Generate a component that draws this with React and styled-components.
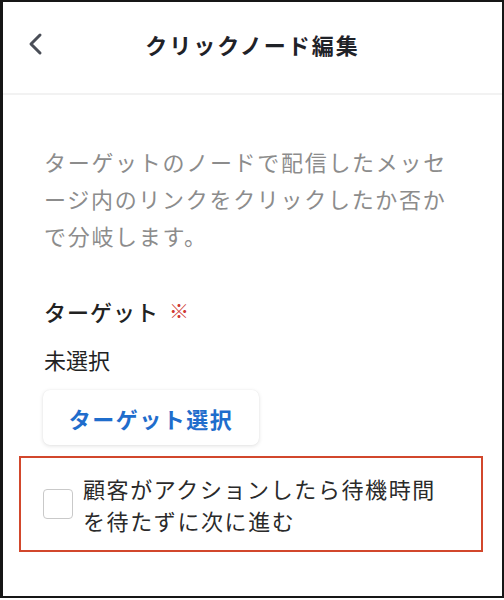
import React, { useState } from 'react'
import styled, { createGlobalStyle } from 'styled-components'

const GlobalStyle = createGlobalStyle`
    html, body {
        margin: 0;
        padding: 0;
        background: #ffffff;
    }
    body {
        font-family: "Noto Sans CJK JP", "Noto Sans", sans-serif;
    }
    * {
        box-sizing: border-box;
    }
`;

function App() {
    const [skipWait, setSkipWait] = useState(false)

    return (
        <>
            <GlobalStyle />
            <Frame>
                <Header>
                    <BackButton aria-label="戻る">
                        <svg width="16" height="24" viewBox="0 0 16 24" fill="none">
                            <polyline points="12,3 3,12 12,21" stroke="#4a4e57" strokeWidth="3" strokeLinecap="round" strokeLinejoin="round" />
                        </svg>
                    </BackButton>
                    <Title>クリックノード編集</Title>
                    <span />
                </Header>
                <Body>
                    <Description>
                        ターゲットのノードで配信したメッセージ内のリンクをクリックしたか否かで分岐します。
                    </Description>
                    <FieldLabel>
                        ターゲット<Required>※</Required>
                    </FieldLabel>
                    <FieldValue>未選択</FieldValue>
                    <SelectButton type="button">ターゲット選択</SelectButton>
                    <OptionBox>
                        <CheckBox
                            type="checkbox"
                            checked={skipWait}
                            onChange={(e) => setSkipWait(e.target.checked)}
                        />
                        <OptionText>顧客がアクションしたら待機時間を待たずに次に進む</OptionText>
                    </OptionBox>
                </Body>
            </Frame>
        </>
    )
}

const Frame = styled.div`
    width: 504px;
    height: 598px;
    border: 2px solid #161616;
    border-left-width: 3px;
    background: #ffffff;
    display: flex;
    flex-direction: column;
    overflow: hidden;
`;

const Header = styled.header`
    height: 93px;
    flex-shrink: 0;
    padding-bottom: 8px;
    display: grid;
    grid-template-columns: 60px 1fr 60px;
    align-items: center;
    border-bottom: 2px solid #f2f2f2;
`;

const BackButton = styled.button`
    border: none;
    background: none;
    padding: 0;
    margin-left: 21px;
    width: 24px;
    height: 30px;
    display: flex;
    align-items: center;
    justify-content: center;
    cursor: pointer;
`;

const Title = styled.h1`
    margin: 0;
    text-align: center;
    font-size: 22px;
    font-weight: 700;
    letter-spacing: 2px;
    color: #1f2228;
`;

const Body = styled.main`
    padding: 48px 44px 0 41px;
    display: flex;
    flex-direction: column;
    align-items: flex-start;
`;

const Description = styled.p`
    margin: 0;
    font-size: 22px;
    line-height: 37px;
    letter-spacing: 1.7px;
    color: #8c8c8c;
`;

const FieldLabel = styled.div`
    margin-top: 42px;
    font-size: 22px;
    line-height: 30px;
    font-weight: 500;
    letter-spacing: 1px;
    color: #222222;
    display: flex;
    align-items: center;
    gap: 10px;
`;

const Required = styled.span`
    color: #cf3a33;
    font-weight: 400;
    font-size: 20px;
`;

const FieldValue = styled.div`
    margin-top: 18px;
    font-size: 22px;
    line-height: 30px;
    color: #222222;
`;

const SelectButton = styled.button`
    margin: 16px 0 0 -1px;
    width: 216px;
    height: 55px;
    border: none;
    border-radius: 7px;
    background: #ffffff;
    box-shadow: 0 1px 4px rgba(0, 0, 0, 0.12), 0 0 1px rgba(0, 0, 0, 0.08);
    font-family: inherit;
    font-size: 22px;
    font-weight: 700;
    letter-spacing: 1.5px;
    color: #1f6dcc;
    cursor: pointer;
`;

const OptionBox = styled.label`
    margin: 11px -25px 0 -25px;
    align-self: stretch;
    height: 96px;
    border: 2px solid #d2472c;
    padding: 0 26px 0 22px;
    display: flex;
    align-items: center;
    gap: 10px;
    cursor: pointer;
`;

const CheckBox = styled.input`
    appearance: none;
    margin: 0;
    flex-shrink: 0;
    width: 30px;
    height: 30px;
    border: 1.5px solid #c9c9c9;
    border-radius: 4px;
    background: #ffffff;
    cursor: pointer;

    &:checked {
        background: #1f6dcc;
        border-color: #1f6dcc;
    }
`;

const OptionText = styled.span`
    font-size: 22px;
    line-height: 32px;
    letter-spacing: 1.6px;
    color: #2a2a2a;
`;

export default App
